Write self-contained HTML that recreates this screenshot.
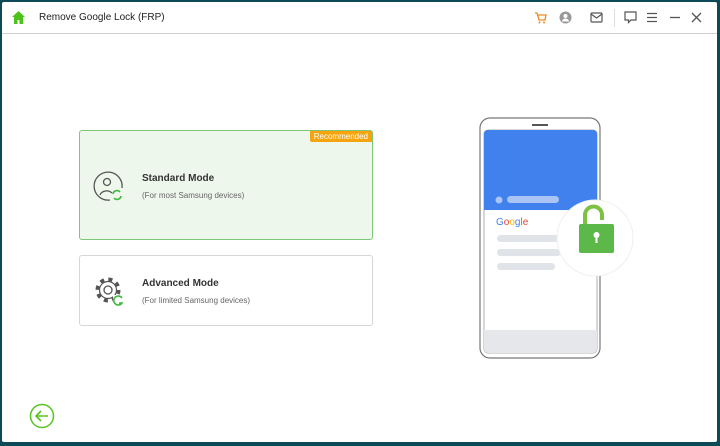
<!DOCTYPE html>
<html><head><style>
body{margin:0;width:720px;height:446px;background:#0c4b55;font-family:"Liberation Sans",sans-serif;overflow:hidden;position:relative}
.win{position:absolute;left:2px;top:2px;width:715px;height:440px;background:#fff;border-radius:2px}
.bar{position:absolute;left:0;top:0;width:715px;height:31px;border-bottom:1px solid #d0d0d0}
.title{position:absolute;left:37px;top:10px;font-size:10px;color:#222}
.card{position:absolute;left:77px;width:292px;border:1px solid #d6d6d6;border-radius:3px;background:#fff}
.c1{top:128px;height:108px;background:#eef7ec;border-color:#7ec77a}
.c2{top:253px;height:69px}
.h{position:absolute;left:62px;font-size:10px;font-weight:bold;color:#333}
.s{position:absolute;left:62px;font-size:8px;color:#666}
.rec{position:absolute;right:0;top:0;background:#f5a40e;color:#fff;font-size:8px;padding:1px 4px;border-bottom-left-radius:2px}
</style></head><body>
<div class="win">
<div class="bar">
<svg style="position:absolute;left:9px;top:8px" width="15" height="15" viewBox="0 0 15 15"><path d="M7.5 1L1 7h2v7h3.5v-4h2v4H12V7h2z" fill="#4cc21a"/></svg>
<div class="title">Remove Google Lock (FRP)</div>
<svg style="position:absolute;left:532px;top:10px" width="13" height="12" viewBox="0 0 13 12"><path d="M1 1h2l2 7h6l1-5H4" fill="none" stroke="#f08a24" stroke-width="1.3"/><circle cx="5.5" cy="10.5" r="1" fill="#f08a24"/><circle cx="10" cy="10.5" r="1" fill="#f08a24"/></svg>
<svg style="position:absolute;left:557px;top:9px" width="13" height="13" viewBox="0 0 13 13"><circle cx="6.5" cy="6.5" r="6" fill="#999"/><circle cx="6.5" cy="5" r="2" fill="#fff"/><path d="M3 10.5a3.5 3 0 0 1 7 0" fill="#fff"/></svg>
<svg style="position:absolute;left:588px;top:10px" width="13" height="11" viewBox="0 0 13 11"><rect x="1" y="1" width="11" height="9" rx="1" fill="none" stroke="#555" stroke-width="1.2"/><path d="M1 2l5.5 4L12 2" fill="none" stroke="#555" stroke-width="1.2"/></svg>
<div style="position:absolute;left:612px;top:7px;width:1px;height:18px;background:#ddd"></div>
<svg style="position:absolute;left:622px;top:9px" width="13" height="13" viewBox="0 0 13 13"><path d="M1 1h11v8H7l-2.5 2.5V9H1z" fill="none" stroke="#555" stroke-width="1.2"/></svg>
<svg style="position:absolute;left:644px;top:10px" width="12" height="11" viewBox="0 0 12 11"><path d="M1 1.5h10M1 5.5h10M1 9.5h10" stroke="#555" stroke-width="1.2"/></svg>
<svg style="position:absolute;left:667px;top:10px" width="12" height="11"><path d="M1 5.5h10" stroke="#555" stroke-width="1.3"/></svg>
<svg style="position:absolute;left:689px;top:10px" width="11" height="11"><path d="M1 1l9 9M10 1l-9 9" stroke="#555" stroke-width="1.3"/></svg>
</div>
<div class="card c1"><div class="rec">Recommended</div>
<svg style="position:absolute;left:13px;top:40px" width="32" height="32" viewBox="0 0 32 32"><path d="M17 29A14 14 0 1 1 29 17" fill="none" stroke="#555" stroke-width="1.3"/><circle cx="14" cy="11" r="3.5" fill="none" stroke="#555" stroke-width="1.3"/><path d="M7 24a7 6 0 0 1 12-2" fill="none" stroke="#555" stroke-width="1.3"/><path d="M20 23a4 4 0 0 1 7-2M28 25a4 4 0 0 1-7 2" fill="none" stroke="#3cb83c" stroke-width="1.6"/></svg>
<div class="h" style="top:42px">Standard Mode</div><div class="s" style="top:60px">(For most Samsung devices)</div></div>
<div class="card c2">
<svg style="position:absolute;left:13px;top:19px" width="32" height="32" viewBox="0 0 32 32"><circle cx="15" cy="15" r="10.5" fill="none" stroke="#555" stroke-width="4" stroke-dasharray="4 4.25"/><circle cx="15" cy="15" r="8.5" fill="#fff" stroke="#555" stroke-width="1.2"/><circle cx="15" cy="15" r="4" fill="none" stroke="#555" stroke-width="1.3"/><rect x="20" y="20" width="12" height="12" fill="#fff"/><path d="M29 23a4.5 4.5 0 1 0 0 5h-3" fill="none" stroke="#3cb83c" stroke-width="1.6"/></svg>
<div class="h" style="top:22px">Advanced Mode</div><div class="s" style="top:40px">(For limited Samsung devices)</div></div>
<svg style="position:absolute;left:476px;top:114px" width="160" height="245" viewBox="0 0 160 245">
<rect x="2" y="2" width="120" height="240" rx="10" fill="#fff" stroke="#777" stroke-width="1.2"/>
<rect x="54" y="8" width="16" height="2" fill="#555"/>
<rect x="6" y="14" width="113" height="223" rx="4" fill="#fff" stroke="#999" stroke-width="0.8"/>
<path d="M10 14h105a4 4 0 0 1 4 4v76H6V18a4 4 0 0 1 4-4z" fill="#4181ee"/>
<circle cx="21" cy="84" r="3.5" fill="#a9c4f5"/><rect x="29" y="80" width="52" height="7" rx="3.5" fill="#a9c4f5"/>
<text x="18" y="109" font-size="10" font-family="Liberation Sans,sans-serif"><tspan fill="#4285f4">G</tspan><tspan fill="#ea4335">o</tspan><tspan fill="#fbbc05">o</tspan><tspan fill="#4285f4">g</tspan><tspan fill="#34a853">l</tspan><tspan fill="#ea4335">e</tspan></text>
<rect x="19" y="119" width="64" height="7" rx="3.5" fill="#e0e3e7"/><rect x="19" y="133" width="64" height="7" rx="3.5" fill="#e0e3e7"/><rect x="19" y="147" width="58" height="7" rx="3.5" fill="#e0e3e7"/>
<path d="M6 214h113v19a4 4 0 0 1-4 4H10a4 4 0 0 1-4-4z" fill="#e5e7ea"/>
<circle cx="117" cy="122" r="38" fill="#fff" stroke="#eee"/>
<path d="M107 109v-10a8.5 8.5 0 0 1 17 0v5" fill="none" stroke="#7cc142" stroke-width="4"/>
<rect x="101" y="108" width="35" height="29" rx="2" fill="#5cb848"/>
<circle cx="118.5" cy="119" r="3" fill="#fff"/><rect x="117.5" y="120" width="2" height="7" fill="#fff"/>
</svg>
<svg style="position:absolute;left:27px;top:401px" width="26" height="26" viewBox="0 0 26 26"><circle cx="13" cy="13" r="11.5" fill="none" stroke="#56c51e" stroke-width="1.5"/><path d="M19 13H7M12 8l-5 5 5 5" fill="none" stroke="#56c51e" stroke-width="1.6"/></svg>
</div>
</body></html>
